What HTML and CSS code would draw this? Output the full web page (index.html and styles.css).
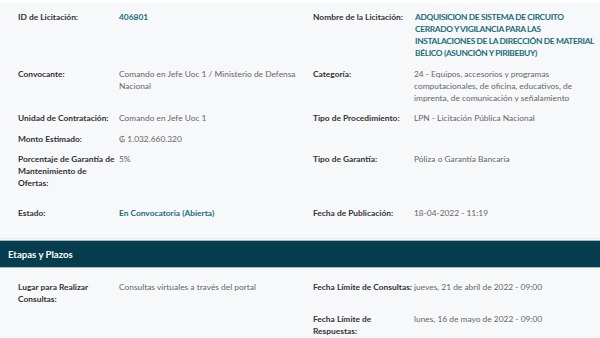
FILE: index.html
```html
<!DOCTYPE html>
<html lang="es">
<head>
<meta charset="utf-8">
<link rel="stylesheet" href="styles.css">
</head>
<body>
<div class="panel first">
  <div class="grid">
    <div class="field"><div class="lbl">ID de Licitación:</div><div class="val link">406801</div></div>
    <div class="field"><div class="lbl">Nombre de la Licitación:</div><div class="val link upper">ADQUISICION DE SISTEMA DE CIRCUITO CERRADO Y VIGILANCIA PARA LAS INSTALACIONES DE LA DIRECCIÓN DE MATERIAL BÉLICO (ASUNCIÓN Y PIRIBEBUY)</div></div>

    <div class="field"><div class="lbl">Convocante:</div><div class="val">Comando en Jefe Uoc 1 / Ministerio de Defensa Nacional</div></div>
    <div class="field"><div class="lbl">Categoría:</div><div class="val">24 - Equipos, accesorios y programas computacionales, de oficina, educativos, de imprenta, de comunicación y señalamiento</div></div>

    <div class="field"><div class="lbl">Unidad de Contratación:</div><div class="val">Comando en Jefe Uoc 1</div></div>
    <div class="field"><div class="lbl">Tipo de Procedimiento:</div><div class="val">LPN - Licitación Pública Nacional</div></div>

    <div class="field"><div class="lbl">Monto Estimado:</div><div class="val">₲ 1.032.660.320</div></div>
    <div class="field"></div>

    <div class="field"><div class="lbl narrow">Porcentaje de Garantía de Mantenimiento de Ofertas:</div><div class="val">5%</div></div>
    <div class="field"><div class="lbl">Tipo de Garantía:</div><div class="val">Póliza o Garantía Bancaria</div></div>

    <div class="field spaced"><div class="lbl">Estado:</div><div class="val link">En Convocatoria (Abierta)</div></div>
    <div class="field spaced"><div class="lbl">Fecha de Publicación:</div><div class="val">18-04-2022 - 11:19</div></div>
  </div>
</div>
<div class="panel second">
  <div class="heading">Etapas y Plazos</div>
  <div class="grid">
    <div class="field"><div class="lbl">Lugar para Realizar Consultas:</div><div class="val">Consultas virtuales a través del portal</div></div>
    <div class="field"><div class="lbl">Fecha Límite de Consultas:</div><div class="val">jueves, 21 de abril de 2022 - 09:00</div></div>
    <div class="field"></div>
    <div class="field"><div class="lbl narrow">Fecha Límite de Respuestas:</div><div class="val">lunes, 16 de mayo de 2022 - 09:00</div></div>
  </div>
</div>
</body>
</html>
```

FILE: styles.css
```css
html, body {
  margin: 0;
  padding: 0;
  background: #f6f8f9;
  font-family: Lato, "Noto Sans", sans-serif;
  font-size: 8.4px;
  line-height: 12px;
  color: #666;
}
body {
  border-top: 3px solid #fdfefe;
  overflow: hidden;
  height: 335px;
}
.panel.first {
  padding: 8px 0 19px 0;
  border-bottom: 1px solid #e6eaec;
}
.grid {
  display: grid;
  grid-template-columns: 295px 1fr;
  row-gap: 8.5px;
  padding-left: 18px;
}
.field {
  display: grid;
  grid-template-columns: 101px 184px;
}
.field.spaced {
  margin-top: 9px;
}
.lbl {
  font-weight: bold;
  color: #333;
  padding-right: 1px;
}
.lbl.narrow {
  padding-right: 4px;
}
.val.link {
  color: #1d6c7c;
  font-weight: bold;
}
.val.upper {
  letter-spacing: -0.35px;
  padding-left: 1px;
}
.second {
  margin-top: 1px;
}
.heading {
  background: #053c4e;
  border-top: 1px solid #9fb8be;
  border-bottom: 1px solid #9fb8be;
  color: #fff;
  font-weight: bold;
  font-size: 9.6px;
  height: 26px;
  line-height: 27px;
  padding-left: 8px;
}
.second .grid {
  padding-top: 12px;
  border-top: 1px solid #fdfefe;
}
```
